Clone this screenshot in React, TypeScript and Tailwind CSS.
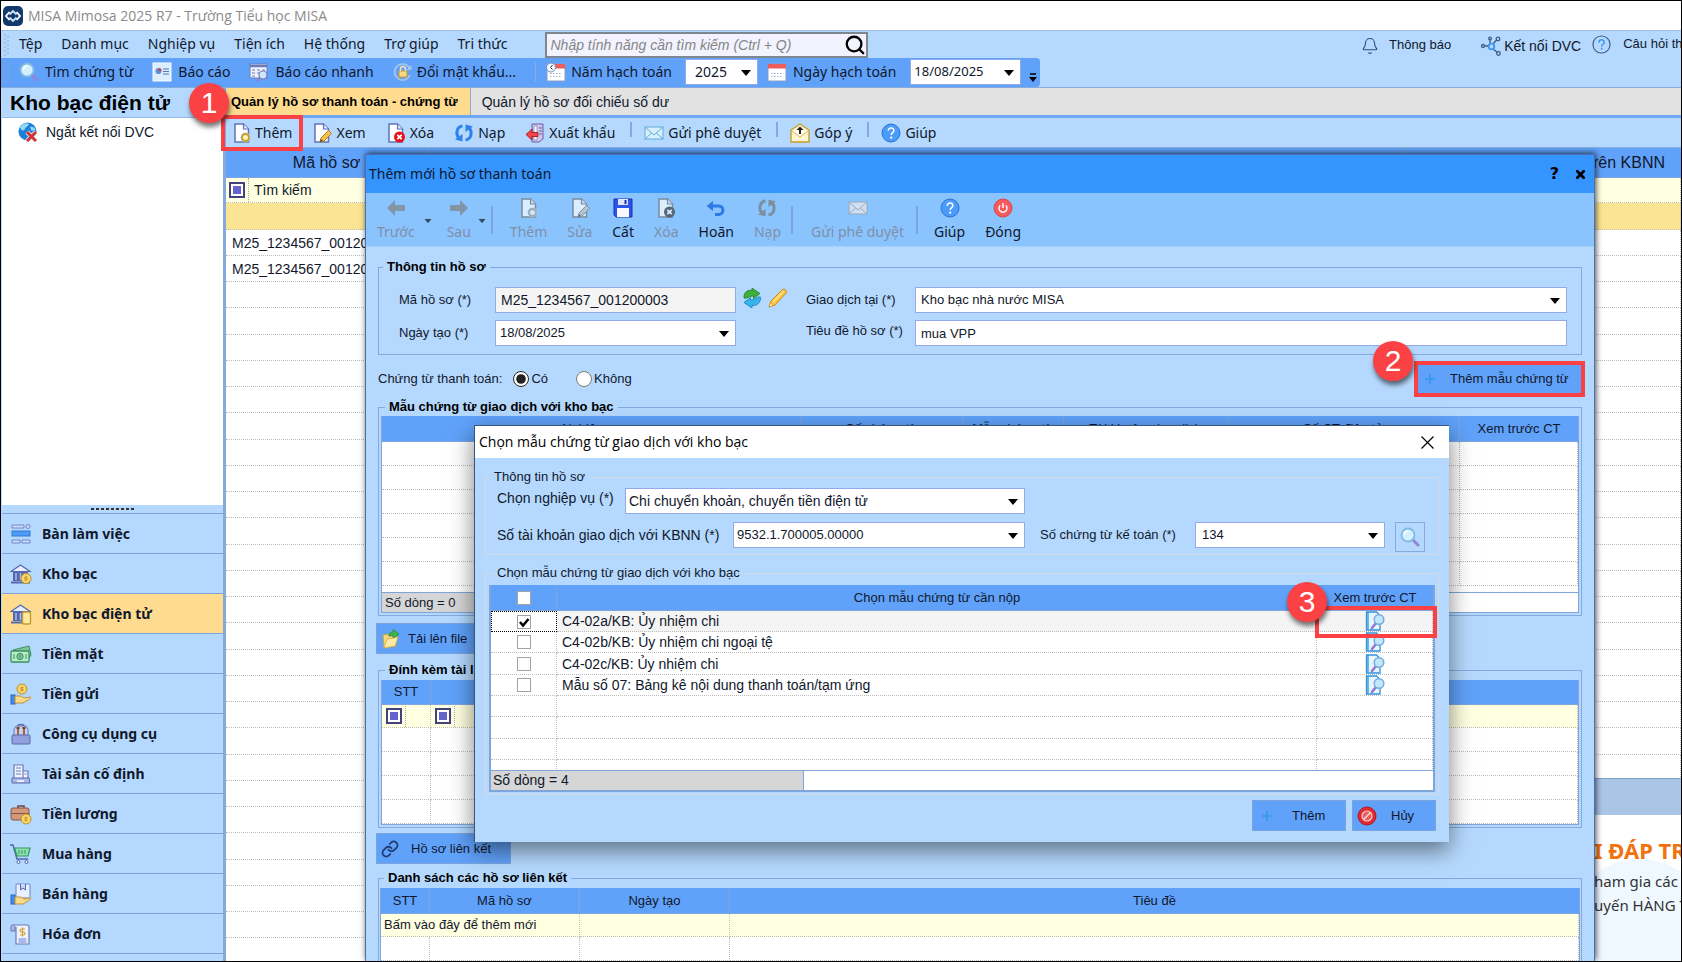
import React, { useState } from 'react';
import { Bell, Link, Search, X } from 'lucide-react';

/* ---------- Icons ---------- */

type IconProps = { className?: string };

const DocBase = () => (
  <>
    <path d="M3 1h8.500l5 5v13H3z" fill="#fff" stroke="#5f74b8" strokeWidth="1.500" />
    <path d="M11.500 1v5h5" fill="#dfe6fb" stroke="#5f74b8" strokeWidth="1.200" />
  </>
);

const DocNewIcon = ({ className = 'h-5 w-5' }: IconProps) => (
  <svg viewBox="0 0 20 20" className={className}>
    <DocBase />
    <circle cx="13.500" cy="14.500" r="5" fill="#b5d9fe" />
    <circle cx="13.500" cy="14.500" r="3.500" fill="#fff6c4" stroke="#c9a02a" strokeWidth="2" />
  </svg>
);

const DocEditIcon = ({ className = 'h-5 w-5' }: IconProps) => (
  <svg viewBox="0 0 20 20" className={className}>
    <DocBase />
    <path d="M8 19l1-4 7.500-7.500 3 3L12 18z" fill="#f2c14e" stroke="#b27a1c" strokeWidth="1" />
    <path d="M8 19l1-3 2 2z" fill="#5a4632" />
  </svg>
);

const DocDeleteIcon = ({ className = 'h-5 w-5' }: IconProps) => (
  <svg viewBox="0 0 20 20" className={className}>
    <DocBase />
    <circle cx="13.500" cy="14" r="5.500" fill="#e8101c" />
    <path d="M11.300 11.800l4.400 4.400M15.700 11.800l-4.400 4.400" stroke="#fff" strokeWidth="1.800" />
  </svg>
);

const ReloadIcon = ({ className = 'h-5 w-5' }: IconProps) => (
  <svg viewBox="0 0 20 20" className={className} fill="none">
    <path d="M8.500 3C3 3.500 1 10.500 5 15.500" stroke="#2f83e8" strokeWidth="3" />
    <path d="M1 16.500l7.500 2V11z" fill="#2f83e8" />
    <path d="M11.500 17c5.500-.5 7.500-7.500 3.500-12.500" stroke="#2f83e8" strokeWidth="3" />
    <path d="M19 3.500l-7.500-2V9z" fill="#2f83e8" />
  </svg>
);

const ExportIcon = ({ className = 'h-5 w-5' }: IconProps) => (
  <svg viewBox="0 0 20 20" className={className}>
    <path d="M7 1h11v15l-4 3H7z" fill="#cfc8ea" stroke="#6a5fa5" />
    <path d="M9 3h3v14H9z" fill="#fff" stroke="#8f86c0" strokeWidth=".8" />
    <path d="M14 5h3M14 8h3M14 11h3" stroke="#6a5fa5" />
    <path d="M1 11.500L7 6v3.500h6v4H7V17z" fill="#f2464a" stroke="#a8151c" strokeWidth=".9" />
  </svg>
);

const MailIcon = ({ className = 'h-5 w-5' }: IconProps) => (
  <svg viewBox="0 0 20 20" className={className}>
    <rect x="1" y="4" width="18" height="12" fill="#d8f0fc" stroke="#5fa9d8" />
    <path d="M1 4l9 8 9-8M1 16l6.500-6M19 16l-6.500-6" fill="none" stroke="#5fa9d8" />
  </svg>
);

const FeedbackIcon = ({ className = 'h-5 w-5' }: IconProps) => (
  <svg viewBox="0 0 20 20" className={className}>
    <path d="M1 7l9-6 9 6v12H1z" fill="#fff6cf" stroke="#c79a2b" strokeWidth="1.300" />
    <path d="M1.500 7.500L10 14l8.500-6.500" fill="#fffdf2" stroke="#d8b658" />
    <path d="M10 3.500L6.500 7H9v4h2V7h2.500z" fill="#222" />
  </svg>
);

const HelpIcon = ({ className = 'h-5 w-5' }: IconProps) => (
  <svg viewBox="0 0 20 20" className={className}>
    <circle cx="10" cy="10" r="9" fill="#4b9bfb" stroke="#2b73d0" />
    <path d="M7.300 7.800c0-3.800 5.600-3.500 5.600-.3 0 2.200-2.700 2.200-2.700 4.500" fill="none" stroke="#fff" strokeWidth="1.500" />
    <circle cx="10.200" cy="14.700" r="1.100" fill="#fff" />
  </svg>
);

const PowerIcon = ({ className = 'h-5 w-5' }: IconProps) => (
  <svg viewBox="0 0 20 20" className={className} fill="none">
    <circle cx="10" cy="10" r="9" fill="#f4595c" stroke="#de4347" />
    <path d="M7.300 7.300a4 4 0 1 0 5.400 0M10 5v5" stroke="#fff" strokeWidth="1.400" />
  </svg>
);

const SaveIcon = ({ className = 'h-5 w-5' }: IconProps) => (
  <svg viewBox="0 0 20 20" className={className}>
    <path d="M1 1h18v18H3l-2-2z" fill="#2b55e8" stroke="#1b2fb4" />
    <rect x="5" y="1" width="10" height="6" fill="#dfe5fb" />
    <rect x="11.500" y="2" width="2" height="4" fill="#1b2fb4" />
    <rect x="4" y="10" width="12" height="9" fill="#f7f8fe" />
  </svg>
);

const UndoIcon = ({ className = 'h-5 w-5' }: IconProps) => (
  <svg viewBox="0 0 20 20" className={className} fill="none">
    <path d="M5 8h8c5 0 5.500 7.500 0 8.500H9" stroke="#2c7be5" strokeWidth="3" />
    <path d="M.5 8L7 3v10z" fill="#2c7be5" />
  </svg>
);

const ArrowIcon = ({ className = 'h-5 w-5' }: IconProps) => (
  <svg viewBox="0 0 20 20" className={className}>
    <path d="M1 10l8-8v5h10v6H9v5z" fill="#808080" />
  </svg>
);

const LensIcon = ({ className = 'h-5 w-5' }: IconProps) => (
  <svg viewBox="0 0 20 20" className={className}>
    <path d="M12.500 12.500l5.500 5.500" stroke="#8f86d8" strokeWidth="3" strokeLinecap="round" />
    <circle cx="8" cy="8" r="6.500" fill="#d3f1fd" stroke="#7fb9e6" strokeWidth="1.800" />
    <path d="M4.500 7.500a4 4 0 0 1 4-3.500" fill="none" stroke="#fff" strokeWidth="1.300" />
  </svg>
);

const ReportIcon = ({ className = 'h-5 w-5' }: IconProps) => (
  <svg viewBox="0 0 20 20" className={className}>
    <rect x="1" y="1" width="18" height="18" fill="#dcedfd" stroke="#f4faff" />
    <circle cx="6.500" cy="9" r="3" fill="#5a8fdc" />
    <path d="M6.500 9V6a3 3 0 0 1 3 3z" fill="#e23b3b" />
    <path d="M11 7h6M11 9.500h6M11 12h6" stroke="#4f79b8" />
  </svg>
);

const QuickReportIcon = ({ className = 'h-5 w-5' }: IconProps) => (
  <svg viewBox="0 0 20 20" className={className}>
    <rect x="1" y="2" width="17" height="14" fill="#eff2fb" stroke="#6d7cb8" />
    <path d="M1 4h17" stroke="#6d7cb8" strokeWidth="2.500" />
    <path d="M3 8h3M3 11h3M3 14h3M8 8h3M8 11h3M13 8h3" stroke="#6d7cb8" />
    <path d="M11.500 15.500L8 19" stroke="#8f7fc8" strokeWidth="2" />
    <circle cx="14" cy="13" r="4" fill="#cfe6fb" stroke="#6d7cb8" strokeWidth="1.200" />
  </svg>
);

const PasswordIcon = ({ className = 'h-5 w-5' }: IconProps) => (
  <svg viewBox="0 0 20 20" className={className} fill="none">
    <path d="M17 13a8 8 0 1 1 0-6" stroke="#a9c6ec" strokeWidth="1.600" />
    <path d="M18.500 3v5h-5z" fill="#a9c6ec" />
    <rect x="6" y="9" width="8" height="6" fill="#f9da7d" stroke="#c79a2b" />
    <path d="M7.500 9V7a2.500 2.500 0 0 1 5 0v2" stroke="#f3e3b4" strokeWidth="1.400" />
  </svg>
);

const CalendarIcon = ({ clock = false }: { clock?: boolean }) => (
  <svg viewBox="0 0 20 20" className="h-5 w-5 shrink-0">
    <rect x="1" y="2" width="18" height="17" fill="#fff" stroke="#8b9cc4" />
    <rect x="1" y="2" width="18" height="4.500" fill="#ee5d5d" />
    <path d="M4 11.500h12M4 14.500h12" stroke="#9fb0d2" strokeDasharray="1.500 1.500" />
    {clock && (
      <>
        <circle cx="5" cy="5.500" r="4.500" fill="#f4faff" stroke="#6f8fc2" />
        <path d="M6.500 3L4.500 5.500l2 2" fill="none" stroke="#334" />
      </>
    )}
  </svg>
);

const GlobeOffIcon = () => (
  <svg viewBox="0 0 20 20" className="h-5 w-5">
    <circle cx="9.500" cy="9.500" r="9" fill="#1c7fd8" />
    <path d="M2 5c3-4 7-4.500 9-3-1 3-4 3-4.500 6-2 1-4 0-4.500-3zM12 5c3-1 5 1 5.500 3l-4 1z" fill="#8fd8f8" />
    <path d="M9 10l9 9M18 10l-9 9" stroke="#fff" strokeWidth="4.500" />
    <path d="M9 10l9 9M18 10l-9 9" stroke="#cf3434" strokeWidth="3" />
  </svg>
);

const ConnectIcon = () => (
  <svg viewBox="0 0 20 20" className="h-5 w-5" fill="none" stroke="#3d5a86" strokeWidth="1.300">
    <path d="M3.500 10h4M9 8V3M12 8l4-4.500M12 13l4.500 3.500" />
    <circle cx="2" cy="10" r="1.500" />
    <circle cx="9" cy="2.500" r="1.300" />
    <circle cx="17" cy="3" r="1.800" />
    <circle cx="17.500" cy="17.500" r="1.800" />
    <circle cx="10.500" cy="10.500" r="2.800" stroke="#3f96f5" strokeWidth="1.800" />
  </svg>
);

const SyncIcon = () => (
  <svg viewBox="0 0 20 20" className="h-5 w-5">
    <path d="M2 10C1.500 4 6 1.500 10 2.500V0l8 5.500-6.500 5V8C8 7.500 5.500 11 2 10z" fill="#3fae3a" stroke="#1f7f25" strokeWidth=".8" />
    <path d="M18.500 9c.5 6-4 9-8.500 8.500V20l-8-5.500 6.500-5V12c3.500.5 6.500-4 10-3z" fill="#38b6ea" stroke="#187fb8" strokeWidth=".8" />
  </svg>
);

const PencilIcon = () => (
  <svg viewBox="0 0 20 20" className="h-5 w-5">
    <path d="M1 19l2-6L14.500 1.500c2-1.500 5 1.500 3.500 3.500L7 17z" fill="#fbc53f" stroke="#c98a18" />
    <path d="M1 19l1.500-4L5 17.500z" fill="#fff1cf" stroke="#c98a18" strokeWidth=".6" />
    <path d="M5 14L15.500 3.500" stroke="#ffe69a" strokeWidth="1.500" />
  </svg>
);

const UploadIcon = () => (
  <svg viewBox="0 0 20 20" className="h-5 w-5">
    <path d="M2 6l5-1 1 2 7-1v11L3 19z" fill="#f6d77a" stroke="#c9a13a" strokeWidth=".8" />
    <path d="M3 19l3-9 11-2-3 9z" fill="#fdeaa5" stroke="#d2ab48" strokeWidth=".8" />
    <path d="M8 7c0-3 2-4 4-4V.500l6 4.500-6 4V6.500c-2 0-3 .5-4 .5z" fill="#3fb649" stroke="#1f8a2a" strokeWidth=".7" />
  </svg>
);

const PreviewIcon = () => (
  <svg viewBox="0 0 20 20" className="mx-auto h-5 w-5">
    <path d="M1.500 1h10l3.500 3.500V19H1.500z" fill="#e6f6ff" stroke="#2f93dc" strokeWidth="1.300" />
    <path d="M3 1v17" stroke="#2f93dc" strokeWidth="1.300" />
    <path d="M11 12l-4 5" stroke="#9478d4" strokeWidth="2.600" strokeLinecap="round" />
    <circle cx="14" cy="8.500" r="4.800" fill="#bfe8fb" stroke="#7aa9de" strokeWidth="1.500" />
  </svg>
);

const BanIcon = () => (
  <svg viewBox="0 0 20 20" className="h-5 w-5" fill="none">
    <circle cx="10" cy="10" r="9" fill="#e02a30" stroke="#b7161c" />
    <circle cx="10" cy="10" r="5" fill="#ec5a5e" stroke="#fbd0d0" strokeWidth="1.200" />
    <path d="M6.500 13.500l7-7" stroke="#fbd0d0" strokeWidth="1.600" />
  </svg>
);

const PlusMark = () => (
  <svg viewBox="0 0 20 20" className="h-5 w-5">
    <path d="M10 5v10M5 10h10" stroke="#2b9bf3" strokeWidth="1.500" />
  </svg>
);

const LogoIcon = () => (
  <svg viewBox="0 0 20 20" className="h-5 w-5" fill="none">
    <rect width="20" height="20" rx="5" fill="#123a6e" />
    <path d="M6.500 6L3 10l3.500 4M13.500 6l3.500 4-3.500 4" stroke="#fff" strokeWidth="1.800" />
    <path d="M6.500 8.500L10 5l3.500 3.500M6.500 11.500L10 15l3.500-3.500" stroke="#cfe4fb" strokeWidth="1.800" />
  </svg>
);

const Coin = ({ cx, cy, r = 4.5 }: { cx: number; cy: number; r?: number }) => (
  <>
    <circle cx={cx} cy={cy} r={r} fill="#f9d56e" stroke="#bd8f25" />
    <path
      d={`M${cx + 1.5} ${cy - 1.5}h-2.200c-1.200 0-1.200 1.500 0 1.500h1.200c1.200 0 1.200 1.500 0 1.500h-2.200M${cx} ${cy - 2.500}v5`}
      fill="none"
      stroke="#bd8f25"
      strokeWidth=".8"
    />
  </>
);

const Bank = () => (
  <>
    <path d="M1 8.500L10.500 2 20 8.500z" fill="#e8eeff" stroke="#5468ad" strokeWidth="1.200" />
    <path d="M3 9h15v9H3z" fill="#5468ad" />
    <path d="M6 10v7M10.500 10v7M15 10v7" stroke="#aab8ea" strokeWidth="1.500" />
    <path d="M1 19.500h19" stroke="#5468ad" strokeWidth="2" />
  </>
);

const navIcons: Record<string, React.ReactNode> = {
  desk: (
    <g strokeWidth="1">
      <path d="M2 2h12v3H2zM2 17h8v3H2zM12 17h8v3h-8z" fill="#cfdcfb" stroke="#6d86c8" />
      <rect x="2" y="8" width="18" height="5" fill="#4a9af6" stroke="#3577d0" />
      <circle cx="18" cy="3.500" r="2" fill="#cfdcfb" stroke="#6d86c8" />
    </g>
  ),
  bank: (
    <>
      <Bank />
      <Coin cx={16} cy={15.5} r={5} />
    </>
  ),
  ebank: (
    <>
      <Bank />
      <rect x="12.500" y="9" width="8" height="12" rx="1.500" fill="#fdeaa0" stroke="#c79a2b" strokeWidth="1.400" />
    </>
  ),
  cash: (
    <>
      <path d="M3 7l16-4 2 9-2 3z" fill="#7fc79b" stroke="#3a8f5d" />
      <rect x="1" y="8" width="18" height="11" rx="1" fill="#b9ecc9" stroke="#3a8f5d" strokeWidth="1.300" />
      <circle cx="10" cy="13.500" r="3.200" fill="#7fc79b" stroke="#3a8f5d" />
      <path d="M4 11v5M16 11v5M10 12v3" stroke="#3a8f5d" />
    </>
  ),
  deposit: (
    <>
      <Coin cx={12} cy={6} r={5} />
      <rect x="1" y="12" width="4" height="9" fill="#3f8ef0" stroke="#2b67c0" />
      <path d="M5 13h5c2 0 3 2 5 2l5-1c2 0 0 2-2 3l-5 3H5z" fill="#f9d98a" stroke="#c1923a" />
    </>
  ),
  tools: (
    <>
      <path d="M4 6l2-3h10l2 3v8H4z" fill="#c4d2f6" stroke="#6b78b6" />
      <path d="M8 5v9M14 5v9" stroke="#a5623c" strokeWidth="2" />
      <path d="M6.500 5h3M12.500 5h3" stroke="#7a3f22" strokeWidth="2" />
      <rect x="2" y="12" width="18" height="9" rx="1" fill="#93a0df" stroke="#5c68a8" />
      <path d="M8 3c0-2 6-2 6 0" fill="none" stroke="#5c68a8" strokeWidth="1.500" />
    </>
  ),
  asset: (
    <>
      <path d="M4 2h9v14H4zM13 8h5v8h-5z" fill="#f0f4ff" stroke="#6b78b6" strokeWidth="1.200" />
      <path d="M6 5h5M6 8h5M6 11h5M14.500 11h2" stroke="#6b78b6" />
      <path d="M2 15h17l1 5H2z" fill="#a9b8ea" stroke="#5c68a8" />
      <path d="M7 18h7" stroke="#fff" strokeWidth="1.500" />
    </>
  ),
  salary: (
    <>
      <path d="M8 5V3h6v2" fill="none" stroke="#70473a" strokeWidth="1.500" />
      <rect x="1" y="5" width="18" height="12" rx="2" fill="#d3987e" stroke="#87543f" />
      <path d="M1 10.500h18" stroke="#87543f" />
      <Coin cx={16} cy={16} r={5} />
    </>
  ),
  buy: (
    <>
      <path d="M0 2h3l4 14h11" fill="none" stroke="#4f63a8" strokeWidth="1.400" />
      <path d="M4.500 5H20l-2 8H7z" fill="#8be3b0" stroke="#35915c" strokeWidth="1.200" />
      <path d="M9 7v4M12 7v4M15 7v4" stroke="#35915c" />
      <circle cx="8.500" cy="19" r="1.500" fill="#fff" stroke="#4f63a8" />
      <circle cx="16.500" cy="19" r="1.500" fill="#fff" stroke="#4f63a8" />
    </>
  ),
  sell: (
    <>
      <rect x="6" y="1" width="14" height="14" rx="1" fill="#eaf0ff" stroke="#6b86c8" />
      <path d="M10.500 1v6l2.500-2 2.500 2V1" fill="#c9d6fa" stroke="#5468ad" />
      <rect x="1" y="12" width="4" height="9" fill="#3f8ef0" stroke="#2b67c0" />
      <path d="M5 14h5c2 0 3 2 5 2l5-1c2 0 0 2-2 3l-5 3H5z" fill="#f9d98a" stroke="#c1923a" />
    </>
  ),
  invoice: (
    <>
      <path d="M1 8V3c0-1.500 4-1.500 4 0v5z" fill="#a9b8ea" stroke="#6b78b6" />
      <path d="M4 2h13c2 0 2 1 2 2v17H6V4" fill="#eef2ff" stroke="#6b78b6" strokeWidth="1.200" />
      <rect x="8.500" y="15" width="8" height="5" fill="#a9b8ea" />
      <path d="M15 6h-3.500c-2 0-2 3 0 3h2c2 0 2 3 0 3H10M12.500 4.500v9" fill="none" stroke="#d3a22c" strokeWidth="1.200" />
    </>
  ),
};

/* ---------- Shared pieces ---------- */

const Caret = ({ className = '' }: IconProps) => (
  <svg viewBox="0 0 10 6" className={`pointer-events-none h-[6px] w-[10px] ${className}`}>
    <path d="M0 0h10L5 6z" fill="#000" />
  </svg>
);

const Callout = ({ step, frame, badge }: { step: number; frame: string; badge: string }) => (
  <>
    <span className={`pointer-events-none absolute z-20 border-4 border-[#fc4144] ${frame}`} />
    <span
      className={`pointer-events-none absolute z-30 flex h-10 w-10 items-center justify-center rounded-full bg-[#fc4144] font-['Liberation_Sans',sans-serif] text-[30px] leading-none text-white shadow-[1px_4px_5px_rgba(0,0,0,0.55)] ${badge}`}
    >
      {step}
    </span>
  </>
);

interface ComboProps {
  id: string;
  value: string;
  className?: string;
  textClass?: string;
}

const Combo = ({ id, value, className = '', textClass = 'pl-1 text-[13px]' }: ComboProps) => (
  <span className={`relative flex h-[26px] border border-[#93a9ea] bg-white ${className}`}>
    <select id={id} className={`h-full w-full appearance-none bg-transparent outline-none ${textClass}`}>
      <option>{value}</option>
    </select>
    <Caret className="absolute right-[6px] top-[10px]" />
  </span>
);

const CheckBox = ({ label, checked, onChange }: { label: string; checked: boolean; onChange: () => void }) => (
  <span className="relative mx-auto block h-[14px] w-[14px]">
    <input
      type="checkbox"
      aria-label={label}
      checked={checked}
      onChange={onChange}
      className="block h-[14px] w-[14px] appearance-none border border-[#a3a3a3] bg-white"
    />
    {checked && (
      <svg viewBox="0 0 14 14" className="pointer-events-none absolute inset-0 h-[14px] w-[14px]" fill="none">
        <path d="M3 7l3 3.500L11.500 4" stroke="#000" strokeWidth="2.500" />
      </svg>
    )}
  </span>
);

const Group = ({
  title,
  children,
  light = false,
  className = '',
}: {
  title: string;
  children: React.ReactNode;
  light?: boolean;
  className?: string;
}) => (
  <fieldset className={`min-w-0 border ${light ? 'border-[#d2dbe4]' : 'border-[#85a9de]'} ${className}`}>
    <legend className={`ml-1 whitespace-nowrap px-1 text-[13px] leading-4 ${light ? '' : 'font-bold text-black'}`}>{title}</legend>
    {children}
  </fieldset>
);

const FilterMark = () => (
  <span className="flex h-4 w-4 shrink-0 items-center justify-center border-2 border-[#43437c] bg-white">
    <span className="h-2 w-2 bg-[#6464cc]" />
  </span>
);

const cell = 'border-b border-r border-dotted border-[#bdbdbd] p-0';
const headCell = 'border-b border-r border-[#7fa5da] p-0 font-normal last:border-r-0';

const EmptyRows = ({ count, cols, className }: { count: number; cols: number; className: string }) => (
  <>
    {Array.from({ length: count }, (_, i) => (
      <tr key={i} className={className}>
        {Array.from({ length: cols }, (_, c) => (
          <td key={c} className={cell} />
        ))}
      </tr>
    ))}
  </>
);

/* ---------- Application chrome ---------- */

const menus = ['Tệp', 'Danh mục', 'Nghiệp vụ', 'Tiện ích', 'Hệ thống', 'Trợ giúp', 'Tri thức'];

const Grip = () => (
  <svg width="6" height="22" className="shrink-0">
    <path d="M1 0v22M4 2v20" stroke="#8fa9cf" strokeDasharray="2 2" />
  </svg>
);

const TopBars = () => (
  <header className="shrink-0 font-['Noto_Sans',sans-serif] text-sm">
    <div className="flex h-[29px] items-center gap-[5px] bg-white pl-[2px] font-['Open_Sans','Noto_Sans',sans-serif] text-[#8b8b8b]">
      <LogoIcon />
      <span>MISA Mimosa 2025 R7 - Trường Tiểu học MISA</span>
    </div>
    <div className="flex h-7 items-center border-t border-[#9cc0ea] bg-[#b5d9fe] pl-[3px]">
      <Grip />
      <nav className="ml-[9px] flex shrink-0 gap-[19px] pb-[2px]">
        {menus.map((m) => (
          <button key={m} className="whitespace-nowrap">
            {m}
          </button>
        ))}
      </nav>
      <div className="ml-[37px] flex h-[26px] w-[323px] shrink-0 items-center border-2 border-[#7d8790] bg-[#f2f3ff] pl-1">
        <input
          aria-label="Nhập tính năng cần tìm kiếm"
          placeholder="Nhập tính năng cần tìm kiếm (Ctrl + Q)"
          className="min-w-0 flex-1 bg-transparent font-['Liberation_Sans',sans-serif] text-sm italic outline-none placeholder:text-[#858585]"
        />
        <Search className="h-[22px] w-[22px] text-black" strokeWidth={2.5} />
      </div>
      <div className="ml-auto flex h-full w-[320px] shrink-0 items-center overflow-hidden whitespace-nowrap pt-[2px] font-['Liberation_Sans',sans-serif] text-[13px]">
        <a href="#notice" className="flex items-center gap-[10px]">
          <Bell className="h-[18px] w-[18px] text-[#2f4c7c]" strokeWidth={1.5} />
          Thông báo
        </a>
        <a href="#connect" className="ml-[30px] flex items-center gap-[3px] text-sm">
          <ConnectIcon />
          Kết nối DVC
        </a>
        <a href="#faq" className="ml-[11px] flex items-center gap-[12px] pb-[3px]">
          <svg viewBox="0 0 20 20" className="h-[19px] w-[19px] shrink-0" fill="none">
            <circle cx="10" cy="10" r="9" stroke="#3d5a86" strokeWidth="1.200" />
            <path d="M7.300 7.800c0-3.800 5.600-3.500 5.600-.3 0 2.200-2.700 2.200-2.700 4.500M10.200 13.500v2" stroke="#3f96f5" strokeWidth="1.600" />
          </svg>
          Câu hỏi thường gặp
        </a>
      </div>
    </div>
    <div className="flex h-[30px] border-b border-[#86abdc] bg-[#b5d9fe]">
      <div className="flex items-center whitespace-nowrap rounded-r bg-[#60a2fa] pb-[2px] pl-[3px]">
        <Grip />
        <button className="ml-[9px] flex items-center gap-[6px]">
          <LensIcon />
          Tìm chứng từ
        </button>
        <button className="ml-[19px] flex items-center gap-[6px]">
          <ReportIcon />
          Báo cáo
        </button>
        <button className="ml-[19px] flex items-center gap-[6px]">
          <QuickReportIcon />
          Báo cáo nhanh
        </button>
        <button className="ml-[19px] flex items-center gap-[4px]">
          <PasswordIcon />
          Đổi mật khẩu...
        </button>
        <span className="ml-[19px] mr-[10px] h-5 w-px bg-[#86aee6]" />
        <CalendarIcon clock />
        <label htmlFor="year" className="ml-[5px] mr-[13px]">
          Năm hạch toán
        </label>
        <Combo id="year" value="2025" className="w-[73px]" textClass="pl-[9px] text-sm" />
        <span className="w-[9px]" />
        <CalendarIcon />
        <label htmlFor="postdate" className="ml-[6px] mr-[14px]">
          Ngày hạch toán
        </label>
        <Combo id="postdate" value="18/08/2025" className="w-[111px]" textClass="pl-[3px] text-[13px]" />
        <button aria-label="Tùy chọn" className="ml-2 mr-[3px] mt-3">
          <svg viewBox="0 0 8 10" className="h-[10px] w-2">
            <path d="M1 1h6" stroke="#000" strokeWidth="1.500" />
            <path d="M0 4h8L4 9z" />
          </svg>
        </button>
      </div>
    </div>
  </header>
);

const navItems = [
  { label: 'Bàn làm việc', icon: 'desk' },
  { label: 'Kho bạc', icon: 'bank' },
  { label: 'Kho bạc điện tử', icon: 'ebank' },
  { label: 'Tiền mặt', icon: 'cash' },
  { label: 'Tiền gửi', icon: 'deposit' },
  { label: 'Công cụ dụng cụ', icon: 'tools' },
  { label: 'Tài sản cố định', icon: 'asset' },
  { label: 'Tiền lương', icon: 'salary' },
  { label: 'Mua hàng', icon: 'buy' },
  { label: 'Bán hàng', icon: 'sell' },
  { label: 'Hóa đơn', icon: 'invoice' },
];

const Sidebar = () => {
  const [active, setActive] = useState('ebank');

  return (
    <aside className="flex w-[225px] shrink-0 flex-col border-r-[3px] border-[#85a9dc] bg-[#b5d9fe] pl-px">
      <h1 className="h-[30px] whitespace-nowrap border-b border-[#94bae8] pl-2 text-[21px] font-bold leading-[29px] text-black">
        Kho bạc điện tử
      </h1>
      <div className="min-h-0 flex-1 bg-white">
        <button className="ml-4 mt-1 flex items-center gap-[8px] whitespace-nowrap text-sm">
          <GlobeOffIcon />
          Ngắt kết nối DVC
        </button>
      </div>
      <div className="flex h-2 justify-center">
        <svg width="44" height="8">
          <path d="M0 4h44" stroke="#333" strokeWidth="2" strokeDasharray="3 2" />
        </svg>
      </div>
      <nav className="shrink-0">
        {navItems.map((item) => (
          <button
            key={item.icon}
            onClick={() => setActive(item.icon)}
            className={`flex h-10 w-full items-center gap-[10px] border-t border-[#7fa3d8] pl-2 font-['Noto_Sans',sans-serif] text-sm font-bold ${
              active === item.icon ? 'bg-[#fedb8f]' : ''
            }`}
          >
            <svg viewBox="0 0 22 22" className="h-[22px] w-[22px]">
              {navIcons[item.icon]}
            </svg>
            {item.label}
          </button>
        ))}
        <div className="h-2 border-t border-[#7fa3d8]" />
      </nav>
    </aside>
  );
};

const ListToolbar = () => {
  const divider = <span className="mb-[6px] h-[15px] w-[2px] bg-[#82aae2]" />;

  return (
    <div className="flex h-[30px] shrink-0 items-center gap-5 whitespace-nowrap border-b border-[#8ab0e0] bg-[#b5d9fe] pl-[6px] font-['Noto_Sans',sans-serif] text-sm">
      <button className="relative flex items-center gap-[3px]">
        <DocNewIcon />
        Thêm
        <Callout step={1} frame="-left-[11px] -right-[11px] -top-2 -bottom-2" badge="-left-[43px] -top-[40px]" />
      </button>
      <button className="flex items-center gap-[4px]">
        <DocEditIcon />
        Xem
      </button>
      <button className="flex items-center gap-[4px]">
        <DocDeleteIcon />
        Xóa
      </button>
      <button className="flex items-center gap-[4px]">
        <ReloadIcon />
        Nạp
      </button>
      <button className="flex items-center gap-[4px]">
        <ExportIcon />
        Xuất khẩu
      </button>
      <div className="-ml-[5px] flex items-center gap-[12px]">
        {divider}
        <button className="flex items-center gap-[4px]">
          <MailIcon />
          Gửi phê duyệt
        </button>
      </div>
      <div className="-ml-[5px] flex items-center gap-[12px]">
        {divider}
        <button className="flex items-center gap-[4px]">
          <FeedbackIcon />
          Góp ý
        </button>
      </div>
      <div className="-ml-[5px] flex items-center gap-[12px]">
        {divider}
        <button className="flex items-center gap-[4px]">
          <HelpIcon />
          Giúp
        </button>
      </div>
    </div>
  );
};

const RecordList = () => (
  <div className="min-h-0 flex-1 overflow-hidden bg-white">
    <table className="w-full table-fixed border-separate border-spacing-0 whitespace-nowrap">
      <colgroup>
        <col className="w-[202px]" />
        <col />
        <col className="w-[274px]" />
      </colgroup>
      <thead>
        <tr className="h-[30px] bg-[#60a2fa] text-base">
          <th className={headCell}>Mã hồ sơ</th>
          <th className={headCell} />
          <th className="border-b border-[#7fa5da] p-0 pr-[16px] text-right font-normal">Trạng thái trên KBNN</th>
        </tr>
      </thead>
      <tbody className="text-sm [&>tr:nth-child(4n+2)]:h-[27px]">
        <tr className="h-[25px] bg-[#ffffe1]">
          <td className={cell} colSpan={3}>
            <div className="flex items-center pl-[3px]">
              <FilterMark />
              <span className="ml-[3px] h-6 border-l border-dotted border-[#a9a9a9]" />
              <span className="ml-[5px]">Tìm kiếm</span>
            </div>
          </td>
        </tr>
        <tr className="h-[26px] bg-[#fbe594]">
          <td className={cell} colSpan={3} />
        </tr>
        {['M25_1234567_001200001', 'M25_1234567_001200002'].map((code) => (
          <tr key={code} className="h-[26px]">
            <td className={`${cell} pl-[6px]!`}>{code}</td>
            <td className={cell} />
            <td className={cell} />
          </tr>
        ))}
        <EmptyRows count={26} cols={3} className="h-[26px]" />
      </tbody>
    </table>
  </div>
);

const PromoPanel = () => (
  <aside className="absolute bottom-0 right-0 flex h-[183px] w-[87px] flex-col overflow-hidden whitespace-nowrap bg-white font-['Noto_Sans',sans-serif]">
    <div className="h-[37px] shrink-0 border-t border-[#7f9fce] bg-[#abc5e6]" />
    <div className="relative flex-1 pt-[19px] text-[15px] leading-6 text-[#333]">
      <svg viewBox="0 0 88 147" className="absolute inset-0 h-full w-full">
        <circle cx="46" cy="116" r="72" fill="#f0f8ff" />
      </svg>
      <div className="relative">
        <div className="mb-[3px] text-[22px] font-bold leading-8 text-[#f0730f]">I ĐÁP TR</div>
        <div>ham gia các</div>
        <div>uyến HÀNG T</div>
      </div>
    </div>
  </aside>
);

/* ---------- Record dialog ---------- */

const ToolButton = ({
  label,
  icon: Icon,
  disabled = false,
  iconClass = 'h-5 w-5',
}: {
  label: string;
  icon: React.FC<IconProps>;
  disabled?: boolean;
  iconClass?: string;
}) => (
  <button disabled={disabled} className={`flex flex-col items-center gap-1 px-[10px] ${disabled ? 'text-[#7f8fa8]' : ''}`}>
    <Icon className={`${iconClass} ${disabled ? 'opacity-70 grayscale' : ''}`} />
    <span>{label}</span>
  </button>
);

const RecordToolbar = () => (
  <div className="flex h-[54px] items-start whitespace-nowrap border-b border-[#a5d0fc] bg-[#8ac4fe] pl-[1px] pt-[5px] font-['Noto_Sans',sans-serif] text-sm">
    <ToolButton label="Trước" icon={ArrowIcon} disabled />
    <Caret className="-ml-[2px] mt-[20px] scale-75 opacity-60" />
    <span className="w-[4px]" />
    <ToolButton label="Sau" icon={ArrowIcon} iconClass="h-5 w-5 rotate-180" disabled />
    <Caret className="-ml-1 mt-[20px] scale-75 opacity-60" />
    <span className="ml-1 mr-[7px] mt-2 h-7 w-[2px] bg-[#79a6e0]" />
    <ToolButton label="Thêm" icon={DocNewIcon} disabled />
    <ToolButton label="Sửa" icon={DocEditIcon} disabled />
    <ToolButton label="Cất" icon={SaveIcon} />
    <ToolButton label="Xóa" icon={DocDeleteIcon} disabled />
    <ToolButton label="Hoãn" icon={UndoIcon} />
    <ToolButton label="Nạp" icon={ReloadIcon} disabled />
    <span className="mr-2 mt-2 h-7 w-[2px] bg-[#79a6e0]" />
    <ToolButton label="Gửi phê duyệt" icon={MailIcon} disabled />
    <span className="ml-[2px] mr-[6px] mt-2 h-7 w-[2px] bg-[#79a6e0]" />
    <ToolButton label="Giúp" icon={HelpIcon} />
    <ToolButton label="Đóng" icon={PowerIcon} />
  </div>
);

const actionButton = 'flex items-center whitespace-nowrap border border-[#7ba4dd] bg-[#60a2fa]';

const RecordDialog = () => (
  <section
    role="dialog"
    aria-label="Thêm mới hồ sơ thanh toán"
    className="absolute bottom-0 left-[364px] right-[86px] top-[153px] flex flex-col overflow-hidden border border-b-0 border-[#4b6fae] bg-[#b5d9fe] text-[13px] shadow-[1px_-1px_6px_rgba(0,0,0,0.7)]"
  >
    <header className="flex h-[38px] shrink-0 items-center bg-[#3495fe] pl-[3px] pr-[7px] font-['Noto_Sans',sans-serif] text-sm">
      <h2 className="flex-1">Thêm mới hồ sơ thanh toán</h2>
      <button aria-label="Trợ giúp" className="mr-[15px] font-['DejaVu_Sans',sans-serif] text-base font-bold text-black">
        ?
      </button>
      <button aria-label="Đóng cửa sổ" className="text-black">
        <X className="h-[13px] w-[13px]" strokeWidth={5} />
      </button>
    </header>
    <div className="shrink-0">
      <RecordToolbar />
    </div>
    <div className="px-3 pt-[12px]">
      <Group title="Thông tin hồ sơ">
        <div className="grid grid-cols-[96px_minmax(120px,241px)_70px_109px_minmax(0,1fr)] items-center gap-y-[7px] pb-2 pl-5 pr-[14px] pt-[12px]">
          <label htmlFor="code">Mã hồ sơ (*)</label>
          <input
            id="code"
            readOnly
            defaultValue="M25_1234567_001200003"
            className="h-[26px] border border-[#93a9ea] bg-[#f4f4f4] pl-[5px] text-sm outline-none"
          />
          <span className="flex gap-[6px] pb-1 pl-[6px]">
            <button aria-label="Làm mới mã">
              <SyncIcon />
            </button>
            <button aria-label="Sửa mã">
              <PencilIcon />
            </button>
          </span>
          <label htmlFor="place">Giao dịch tại (*)</label>
          <Combo id="place" value="Kho bạc nhà nước MISA" textClass="pl-[5px] text-[13px]" />
          <label htmlFor="created">Ngày tạo (*)</label>
          <Combo id="created" value="18/08/2025" />
          <span />
          <label htmlFor="subject" className="pb-1">
            Tiêu đề hồ sơ (*)
          </label>
          <input id="subject" defaultValue="mua VPP" className="h-[26px] border border-[#93a9ea] bg-white pl-[5px] outline-none" />
        </div>
      </Group>

      <div className="mt-[10px] flex h-7 items-center whitespace-nowrap">
        <span>Chứng từ thanh toán:</span>
        <label className="ml-[11px] flex items-center gap-[2px]">
          <input type="radio" name="voucher" defaultChecked className="h-4 w-4 accent-[#222]" />
          Có
        </label>
        <label className="ml-7 flex items-center gap-[2px]">
          <input type="radio" name="voucher" className="h-4 w-4 accent-[#222]" />
          Không
        </label>
        <button className="relative ml-auto mr-px flex h-7 w-[163px] items-center gap-[10px] bg-[#60a2fa] pl-[2px]">
          <PlusMark />
          Thêm mẫu chứng từ
          <Callout step={2} frame="-inset-1" badge="-left-[45px] -top-6" />
        </button>
      </div>

      <Group title="Mẫu chứng từ giao dịch với kho bạc" className="mt-[6px] px-[2px] pb-[2px] pt-px">
        <div className="border border-t-0 border-[#7fa5da] bg-white">
          <div className="h-[176px] overflow-hidden">
            <table className="w-full table-fixed border-separate border-spacing-0">
              <colgroup>
                <col />
                <col className="w-[161px]" />
                <col className="w-[101px]" />
                <col className="w-[164px]" />
                <col className="w-[232px]" />
                <col className="w-[118px]" />
              </colgroup>
              <thead>
                <tr className="h-[26px] bg-[#60a2fa]">
                  {['Nghiệp vụ', 'Số chứng từ', 'Mẫu chứng từ', 'Tài khoản giao dịch', 'Số CT điện tử', 'Xem trước CT'].map((h) => (
                    <th key={h} className={headCell}>
                      {h}
                    </th>
                  ))}
                </tr>
              </thead>
              <tbody>
                <EmptyRows count={6} cols={6} className="h-6" />
              </tbody>
            </table>
          </div>
          <div className="flex h-5 border-t border-[#7fa5da]">
            <span className="w-[360px] border-r border-[#7fa5da] bg-[#d6d6d6] pl-[3px] leading-[19px]">Số dòng = 0</span>
          </div>
        </div>
      </Group>

      <button className={`${actionButton} -ml-[2px] mt-[7px] h-[31px] w-[130px] gap-[7px] pl-1`}>
        <UploadIcon />
        Tải lên file
      </button>

      <Group title="Đính kèm tài liệu" className="mt-2 px-[2px] pb-[2px] pt-[2px]">
        <table className="w-full table-fixed border-separate border-spacing-0 border border-t-0 border-[#7fa5da] bg-white">
          <colgroup>
            <col className="w-[49px]" />
            <col />
          </colgroup>
          <thead>
            <tr className="h-[25px] bg-[#60a2fa]">
              <th className={headCell}>STT</th>
              <th className={headCell} />
            </tr>
          </thead>
          <tbody>
            <tr className="h-[23px] bg-[#ffffe1]">
              {[0, 1].map((i) => (
                <td key={i} className={cell}>
                  <div className="flex items-center pl-1">
                    <FilterMark />
                    <span className="ml-[3px] h-[21px] border-l border-dotted border-[#a9a9a9]" />
                  </div>
                </td>
              ))}
            </tr>
            <EmptyRows count={4} cols={2} className="h-6" />
          </tbody>
        </table>
      </Group>

      <button className={`${actionButton} -ml-[2px] mt-[5px] h-[31px] w-[135px] gap-[12px] pl-1`}>
        <Link className="h-[18px] w-[18px] text-[#1f3f73]" strokeWidth={2.5} />
        Hồ sơ liên kết
      </button>

      <Group title="Danh sách các hồ sơ liên kết" className="mt-[6px] px-[1px] pt-[2px]">
        <table className="w-full table-fixed border-separate border-spacing-0 whitespace-nowrap border border-t-0 border-[#7fa5da] bg-white">
          <colgroup>
            <col className="w-[49px]" />
            <col className="w-[150px]" />
            <col className="w-[150px]" />
            <col />
          </colgroup>
          <thead>
            <tr className="h-[26px] bg-[#60a2fa]">
              {['STT', 'Mã hồ sơ', 'Ngày tạo', 'Tiêu đề'].map((h) => (
                <th key={h} className={headCell}>
                  {h}
                </th>
              ))}
            </tr>
          </thead>
          <tbody>
            <tr className="h-[23px] bg-[#ffffe1]">
              <td colSpan={2} className={`${cell} pl-[3px]!`}>
                Bấm vào đây để thêm mới
              </td>
              <td className={cell} />
              <td className={cell} />
            </tr>
            <EmptyRows count={2} cols={4} className="h-6" />
          </tbody>
        </table>
      </Group>
    </div>
  </section>
);

/* ---------- Template picker dialog ---------- */

const templates = [
  'C4-02a/KB: Ủy nhiệm chi',
  'C4-02b/KB: Ủy nhiệm chi ngoại tệ',
  'C4-02c/KB: Ủy nhiệm chi',
  'Mẫu số 07: Bảng kê nội dung thanh toán/tạm ứng',
];

const TemplateDialog = () => {
  const [checked, setChecked] = useState([true, false, false, false]);

  const toggle = (index: number) => {
    setChecked(checked.map((value, i) => (i === index ? !value : value)));
  };

  const toggleAll = () => {
    const next = !checked.every(Boolean);
    setChecked(checked.map(() => next));
  };

  return (
    <section
      role="dialog"
      aria-label="Chọn mẫu chứng từ giao dịch với kho bạc"
      className="absolute left-[473px] right-[232px] top-[424px] border border-b-0 border-r-0 border-[#35567f] bg-[#b5d9fe] text-[13px] shadow-[0_8px_22px_rgba(0,0,0,0.5)]"
    >
      <header className="flex h-8 items-center justify-between bg-white pl-1 pr-[15px] font-['Open_Sans','Noto_Sans',sans-serif] text-sm text-black">
        <h2>Chọn mẫu chứng từ giao dịch với kho bạc</h2>
        <button aria-label="Đóng">
          <svg viewBox="0 0 13 13" className="h-[13px] w-[13px]">
            <path d="M.5.5l12 12M12.500.5l-12 12" stroke="#000" strokeWidth="1.200" />
          </svg>
        </button>
      </header>
      <div className="px-[10px] pb-[11px] pt-[11px]">
        <Group title="Thông tin hồ sơ" light>
          <div className="flex flex-col gap-2 whitespace-nowrap pb-[6px] pl-[11px] pr-[13px] pt-[3px]">
            <div className="flex items-start">
              <label htmlFor="operation" className="w-[128px] text-sm">
                Chọn nghiệp vụ (*)
              </label>
              <Combo id="operation" value="Chi chuyển khoản, chuyển tiền điện tử" className="w-[400px]" textClass="pl-[3px] text-sm" />
            </div>
            <div className="flex h-[26px] items-center">
              <label htmlFor="account" className="w-[236px] shrink-0 text-sm">
                Số tài khoản giao dịch với KBNN (*)
              </label>
              <Combo id="account" value="9532.1.700005.00000" className="w-[292px]" textClass="pl-[3px] text-[13px]" />
              <label htmlFor="voucher-no" className="ml-[15px] w-[155px] shrink-0">
                Số chứng từ kế toán (*)
              </label>
              <Combo id="voucher-no" value="134" className="flex-1" textClass="pl-[6px] text-[13px]" />
              <button aria-label="Tìm" className="ml-[10px] mt-[4px] flex h-[30px] w-[30px] items-center justify-center border border-[#86aadc]">
                <LensIcon />
              </button>
            </div>
          </div>
        </Group>

        <Group title="Chọn mẫu chứng từ giao dịch với kho bạc" light className="mt-[10px] px-[3px] pb-[2px] pt-[4px]">
          <div className="border-x-2 border-b-2 border-[#7fa5da] bg-white">
            <div className="h-[185px] overflow-hidden">
              <table className="w-full table-fixed border-separate border-spacing-0 whitespace-nowrap">
                <colgroup>
                  <col className="w-[66px]" />
                  <col />
                  <col className="w-[116px]" />
                </colgroup>
                <thead>
                  <tr className="h-[26px] bg-[#60a2fa]">
                    <th className={headCell}>
                      <CheckBox label="Chọn tất cả" checked={checked.every(Boolean)} onChange={toggleAll} />
                    </th>
                    <th className="border-b border-[#7fa5da] p-0 font-normal">Chọn mẫu chứng từ cần nộp</th>
                    <th className={headCell}>Xem trước CT</th>
                  </tr>
                </thead>
                <tbody className="[&>tr:nth-child(3n)]:h-[22px]">
                  {templates.map((name, i) => (
                    <tr key={name} className={`h-[21px] ${i === 0 ? 'bg-[#f4f4f4]' : ''}`}>
                      <td className={i === 0 ? 'border border-dotted border-black bg-white p-0' : cell}>
                        <CheckBox label={name} checked={checked[i]} onChange={() => toggle(i)} />
                      </td>
                      <td className={`${cell} pl-[5px]! text-sm leading-5`}>{name}</td>
                      <td className={cell}>
                        <button aria-label={`Xem trước ${name}`} className="block w-full">
                          <PreviewIcon />
                        </button>
                      </td>
                    </tr>
                  ))}
                  <EmptyRows count={4} cols={3} className="h-[21px]" />
                </tbody>
              </table>
            </div>
            <div className="flex h-5 border-t border-[#7fa5da]">
              <span className="w-[313px] border-r border-[#7fa5da] bg-[#d6d6d6] pl-[2px] text-sm leading-[19px]">Số dòng = 4</span>
            </div>
          </div>
        </Group>
        <div className="mt-[5px] flex justify-end gap-[6px] pr-[3px]">
          <button className={`${actionButton} h-[31px] w-[94px] gap-[15px] pl-1`}>
            <PlusMark />
            Thêm
          </button>
          <button className={`${actionButton} h-[31px] w-[84px] gap-[14px] pl-1`}>
            <BanIcon />
            Hủy
          </button>
        </div>
      </div>
      <Callout step={3} frame="right-[12px] top-[180px] h-8 w-[122px]" badge="right-[122px] top-[156px]" />
    </section>
  );
};

export default function App() {
  return (
    <div className="relative flex h-screen flex-col overflow-hidden border border-black bg-[#b5d9fe] font-['Liberation_Sans',Arial,sans-serif] text-[#10182c]">
      <TopBars />
      <div className="flex min-h-0 flex-1">
        <Sidebar />
        <main className="flex min-w-0 flex-1 flex-col">
          <div className="flex h-[30px] shrink-0 whitespace-nowrap border-b-[3px] border-[#6ea7f4] bg-[#e2e2e2]">
            <button className="bg-[#fedb8f] pl-[5px] pr-3 text-[13px] font-bold text-black">Quản lý hồ sơ thanh toán - chứng từ</button>
            <button className="border-l border-[#9aa9bd] px-[11px] text-sm">Quản lý hồ sơ đối chiếu số dư</button>
          </div>
          <ListToolbar />
          <RecordList />
        </main>
      </div>
      <PromoPanel />
      <RecordDialog />
      <TemplateDialog />
    </div>
  );
}
